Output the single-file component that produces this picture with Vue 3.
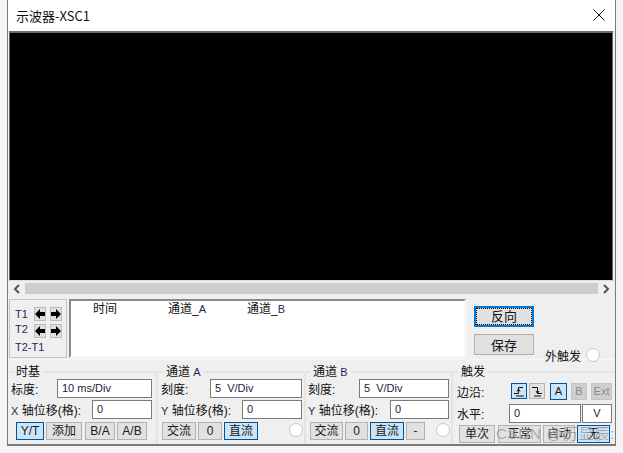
<template>
  <div class="page">
    <div class="window">
      <div class="titlebar">
        <span class="title">示波器-XSC1</span>
        <svg class="close" viewBox="0 0 12 12" width="12" height="12">
          <path d="M0.5 0.5 L11.5 11.5 M11.5 0.5 L0.5 11.5" stroke="#111" stroke-width="1" fill="none" />
        </svg>
      </div>

      <div class="scope"></div>

      <div class="scrollbar">
        <svg viewBox="0 0 8 10" width="8" height="10"><path d="M6 1 L2 5 L6 9" stroke="#555" stroke-width="2" fill="none" /></svg>
        <div class="track"></div>
        <svg viewBox="0 0 8 10" width="8" height="10"><path d="M2 1 L6 5 L2 9" stroke="#555" stroke-width="2" fill="none" /></svg>
      </div>

      <div class="readout-row">
        <div class="cursors">
          <div class="cursor-row">
            <span>T1</span>
            <button class="arrow"><svg viewBox="0 0 10 10" width="10" height="10"><path d="M0 5 L5 0 V3 H10 V7 H5 V10 Z" /></svg></button>
            <button class="arrow"><svg viewBox="0 0 10 10" width="10" height="10"><path d="M10 5 L5 0 V3 H0 V7 H5 V10 Z" /></svg></button>
          </div>
          <div class="cursor-row second">
            <span>T2</span>
            <button class="arrow"><svg viewBox="0 0 10 10" width="10" height="10"><path d="M0 5 L5 0 V3 H10 V7 H5 V10 Z" /></svg></button>
            <button class="arrow"><svg viewBox="0 0 10 10" width="10" height="10"><path d="M10 5 L5 0 V3 H0 V7 H5 V10 Z" /></svg></button>
          </div>
          <div class="delta">T2-T1</div>
        </div>
        <div class="readout">
          <span class="col-time">时间</span>
          <span class="col-a">通道_<b>A</b></span>
          <span class="col-b">通道_<b>B</b></span>
        </div>
        <div class="actions">
          <button class="btn-main focused"><span>反向</span></button>
          <div class="save-row">
            <button class="btn-main">保存</button>
            <div class="ext"><span>外触发</span><i class="pin"></i></div>
          </div>
        </div>
      </div>

      <div class="controls">
        <fieldset class="group timebase">
          <legend>时基</legend>
          <div class="row"><label>标度:</label><div class="field w95">10 ms/Div</div></div>
          <div class="row"><label><b>X</b> 轴位移(格):</label><div class="field w60">0</div></div>
          <div class="btns tb-btns">
            <button class="on w28">Y/T</button>
            <button class="w36">添加</button>
            <button class="w30 ml1">B/A</button>
            <button class="w30">A/B</button>
          </div>
        </fieldset>

        <fieldset class="group channel-a">
          <legend>通道 <b>A</b></legend>
          <div class="row"><label>刻度:</label><div class="field w92">5&nbsp; V/Div</div></div>
          <div class="row"><label><b>Y</b> 轴位移(格):</label><div class="field w60">0</div></div>
          <div class="btns">
            <button class="w34">交流</button>
            <button class="w24">0</button>
            <button class="on w34">直流</button>
            <i class="pin push"></i>
          </div>
        </fieldset>

        <fieldset class="group">
          <legend>通道 <b>B</b></legend>
          <div class="row"><label>刻度:</label><div class="field w90">5&nbsp; V/Div</div></div>
          <div class="row"><label><b>Y</b> 轴位移(格):</label><div class="field w59">0</div></div>
          <div class="btns">
            <button class="w33">交流</button>
            <button class="w23">0</button>
            <button class="on w34">直流</button>
            <button class="w19">-</button>
            <i class="pin push"></i>
          </div>
        </fieldset>

        <fieldset class="group trigger">
          <legend>触发</legend>
          <div class="row edge-row">
            <label>边沿:</label>
            <div class="edges">
              <button class="on square">
                <svg viewBox="0 0 12 12" width="12" height="12"><path d="M1 8.5 H5.5 V2.5 H10 M3 11 H11 M4 6.5 L5.5 4 L7 6.5" stroke="#111" fill="none" /></svg>
              </button>
              <button class="square">
                <svg viewBox="0 0 12 12" width="12" height="12"><path d="M1 2.5 H6.5 V8.5 H11 M5 6 L6.5 8.5 L8 6 M3 11 H10" stroke="#111" fill="none" /></svg>
              </button>
              <button class="on w17 ml3">A</button>
              <button class="off w16 ml2">B</button>
              <button class="off w21 ml2">Ext</button>
            </div>
          </div>
          <div class="row level-row">
            <label>水平:</label>
            <div class="level">
              <div class="field w72">0</div>
              <div class="field w30 unit">V</div>
            </div>
          </div>
          <div class="btns trig-btns">
            <button class="w36">单次</button>
            <button class="w43 ml1">正常</button>
            <button class="w32">自动</button>
            <button class="on w33">无</button>
          </div>
        </fieldset>
      </div>

      <span class="watermark">CSDN @历显辰:</span>
    </div>
  </div>
</template>

<script setup>
</script>

<style>
html,
body {
  margin: 0;
  background: #f4f4f4;
  overflow: hidden;
}
</style>

<style scoped>
.page {
  width: 623px;
  height: 453px;
  padding-left: 7px;
  box-sizing: border-box;
  font-family: "Liberation Sans", "Noto Sans CJK SC", sans-serif;
  font-size: 12px;
  color: #111;
}

.window {
  position: relative;
  width: 609px;
  height: 446px;
  box-sizing: border-box;
  border: 1px solid #7a7a7a;
  border-top: 0;
  border-bottom-width: 2px;
  background: #efefef;
  overflow: hidden;
}

.titlebar {
  height: 31px;
  background: #fff;
  display: flex;
  align-items: center;
  justify-content: space-between;
  padding: 0 10px 0 8px;
}

.title {
  font-family: "Noto Sans CJK SC", sans-serif;
  font-size: 13px;
  margin-top: -1px;
}

.close {
  margin-top: -1px;
}

.scope {
  height: 247px;
  margin: 0 2px 0 1px;
  background: #000;
  border: 1px solid #6b6b6b;
  border-top-width: 2px;
  border-bottom-color: #ddd;
}

.scrollbar {
  height: 13px;
  margin: 1px 1px 0 1px;
  display: flex;
  align-items: center;
  gap: 4px;
  padding: 0 4px;
}

.track {
  flex: 1;
  height: 11px;
  background: #cdcdcd;
}

.readout-row {
  display: flex;
  height: 60px;
  margin-top: 4px;
  padding-left: 1px;
  border-bottom: 1px solid #f7f7f7;
}

.cursors {
  width: 58px;
  height: 59px;
  box-sizing: border-box;
  border: 1px solid #c4c4c4;
  padding: 6px 0 0 5px;
  font-size: 11px;
  color: #1a2a5e;
}

.cursor-row {
  display: flex;
  align-items: center;
  height: 16px;
  margin-bottom: 1px;
}

.cursor-row span {
  width: 20px;
}

.cursor-row.second span {
  margin-top: -5px;
}

.arrow {
  width: 13px;
  height: 14px;
  margin-right: 4px;
  padding: 0;
  border: 1px solid #bcbcbc;
  background: #e0e0e0;
  display: flex;
  align-items: center;
  justify-content: center;
}

.delta {
  margin-top: 2px;
}

.readout {
  width: 397px;
  height: 59px;
  margin-left: 2px;
  box-sizing: border-box;
  border: 2px solid #8a8a8a;
  border-right-color: #f8f8f8;
  border-bottom-color: #f8f8f8;
  background: #fff;
  display: flex;
  line-height: 16px;
}

.readout b {
  font-weight: 400;
  font-size: 11px;
  color: #1a2a5e;
}

.col-time {
  margin-left: 22px;
  width: 75px;
}

.col-a {
  width: 79px;
}

.actions {
  margin-left: 8px;
  padding-top: 7px;
}

.btn-main {
  display: block;
  width: 60px;
  height: 21px;
  padding: 0;
  border: 1px solid #b0b0b0;
  background: #e1e1e1;
  font: inherit;
  font-size: 13px;
  color: #111;
}

.btn-main.focused {
  border: 2px solid #0078d7;
}

.btn-main.focused span {
  display: block;
  height: 100%;
  line-height: 15px;
  box-sizing: border-box;
  border: 1px dotted #000;
}

.save-row {
  display: flex;
  margin-top: 7px;
}

.ext {
  display: flex;
  align-items: center;
  gap: 5px;
  margin: 13px 0 0 11px;
  height: 16px;
  white-space: nowrap;
}

.pin {
  display: block;
  width: 12px;
  height: 12px;
  border: 1px solid #c8c8c8;
  border-radius: 50%;
  background: #fff;
  flex: none;
}

.controls {
  display: grid;
  grid-template-columns: 149px 148px 147px 1fr;
  margin-top: 5px;
  padding-left: 1px;
  height: 80px;
}

.group {
  margin: 0;
  min-width: 0;
  padding: 0 0 0 2px;
  border: 2px solid #e4e4e4;
  border-left-width: 0;
  border-bottom: 0;
}

.channel-a {
  padding-left: 3px;
}

.channel-a .btns {
  margin-left: 1px;
}

.group legend {
  margin-left: 2px;
  padding: 0 3px;
  font-size: 12px;
  line-height: 14px;
  height: 14px;
}

.group b {
  font-weight: 400;
  font-size: 11px;
  color: #1a2a5e;
}

.row {
  display: flex;
  align-items: center;
  justify-content: space-between;
  height: 19px;
  margin-bottom: 2px;
  white-space: nowrap;
}

.field {
  box-sizing: border-box;
  height: 19px;
  border: 1px solid #7a7a7a;
  background: #fff;
  padding-left: 4px;
  font-size: 11px;
  line-height: 16px;
  color: #1a1a3a;
  margin-right: 2px;
}

.timebase .field {
  margin-right: 4px;
}

.w95 { width: 95px; }
.w92 { width: 92px; }
.w90 { width: 90px; }
.w60 { width: 60px; }
.w59 { width: 59px; }
.w72 { width: 72px; }

.btns {
  display: flex;
  align-items: flex-start;
  gap: 2px;
  margin: 3px 0 0 2px;
}

.tb-btns {
  margin-left: 5px;
}

.btns button,
.edges button {
  height: 18px;
  padding: 0;
  border: 1px solid #b2b2b2;
  background: #e1e1e1;
  font-family: "Liberation Sans", "Noto Sans CJK SC", sans-serif;
  font-size: 12px;
  line-height: 15px;
  color: #1a1a1a;
}

.btns button.on,
.edges button.on {
  background: #cce4f7;
  border-color: #005499;
}

.edges button.off {
  background: #cfcfcf;
  border-color: #c4c4c4;
  color: #8a8a8a;
}

.w28 { width: 28px; }
.w36 { width: 36px; }
.w30 { width: 30px; }
.w34 { width: 34px; }
.w24 { width: 24px; }
.w33 { width: 33px; }
.w23 { width: 23px; }
.w19 { width: 19px; }
.w43 { width: 43px; }
.w32 { width: 32px; }
.w17 { width: 17px; }
.w16 { width: 16px; }
.w21 { width: 21px; }

.ml1 { margin-left: 1px; }
.ml2 { margin-left: 2px; }
.ml3 { margin-left: 3px; }

.push {
  margin: 1px 1px 0 auto;
}

.trigger {
  border-right: 0;
  padding-left: 4px;
}

.edges {
  display: flex;
  gap: 2px;
  margin-right: 3px;
}

.edges .square {
  width: 16px;
  height: 16px;
  display: flex;
  align-items: center;
  justify-content: center;
}

.edges button.w17,
.edges button.w16,
.edges button.w21 {
  height: 17px;
  font-size: 11px;
}

.edge-row {
  height: 25px;
  margin-bottom: 0;
}

.trigger legend {
  margin-left: 1px;
}

.level {
  display: flex;
  gap: 1px;
  margin-right: 3px;
}

.level .field {
  margin-right: 0;
}

.unit {
  text-align: center;
  padding-left: 0;
}

.trig-btns {
  margin-top: 1px;
  margin-left: 2px;
}

.watermark {
  position: absolute;
  right: 0;
  bottom: 1px;
  font-size: 15px;
  letter-spacing: 0.8px;
  color: rgba(110, 110, 110, 0.6);
  text-shadow: 0 0 1px rgba(255, 255, 255, 0.8);
  pointer-events: none;
}
</style>
